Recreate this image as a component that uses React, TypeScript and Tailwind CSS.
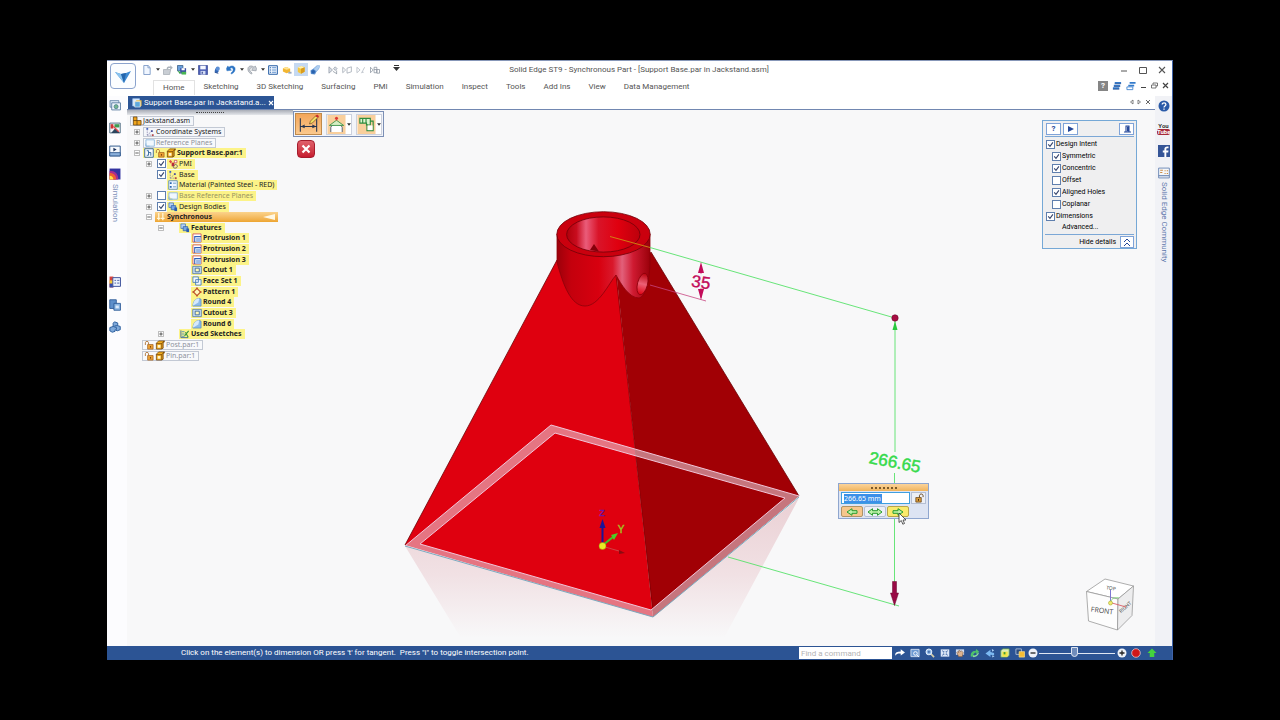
import React, { useState } from "react";

type IconName =
  | "new" | "open" | "saveAs" | "save" | "drop" | "undo" | "redo" | "list" | "box" | "cube" | "brush"
  | "selA" | "selB" | "selC" | "selD" | "asm" | "coord" | "plane" | "sketch" | "lock" | "part" | "pmi"
  | "material" | "bodies" | "sync" | "protrusion" | "cutout" | "faces" | "pattern" | "round" | "used"
  | "library" | "family" | "play" | "sim" | "sensors" | "layers" | "parts" | "window" | "cascade"
  | "fit" | "zoom" | "pan" | "rotate" | "move" | "views" | "style" | "goto" | "up" | "community";

const art: Record<IconName, React.ReactNode> = {
  new: <><path d="M2 .5h4.700l2.300 2.300v7.700H2z" fill="#f0f6ff" stroke="#6f90c0" strokeWidth=".9" /><path d="M6.500.800v2.300h2.200" fill="none" stroke="#6f90c0" strokeWidth=".8" /></>,
  open: <><path d="M.5 5h8l-1.200 5.500H.5z" fill="#c9ced4" stroke="#9aa1aa" strokeWidth=".7" /><path d="M4 4c0-2 2-2.600 4-2.200V.2L10.800 3 8 5.500V3.500C6.500 3.200 5.500 3.500 5.500 5z" fill="#a9b1ba" /></>,
  saveAs: <><path d="M.5.500h6v6h-6z" fill="#6aa0dd" stroke="#30557f" strokeWidth=".8" /><path d="M3.500 3.500h6.500v6H3.500z" fill="#3b4fa2" /><path d="M5 3.500h3.500v2.300H5z" fill="#fff" /><path d="M.5 6l2.500 4 1-2z" fill="#36a344" /><path d="M5 7.500h5v3H5z" fill="#49b653" /></>,
  save: <><path d="M.5.500h10v10H.5z" fill="#4c5fb5" stroke="#31428f" strokeWidth=".7" /><path d="M2.500.800h6v4h-6z" fill="#f5f8ff" /><path d="M2.800 6.500h5.400v4H2.800z" fill="#d3dcf4" /><path d="M4 7.300h1.300v2.400H4z" fill="#31428f" /></>,
  drop: <><path d="M6.800 2.200C4 2.500 2.800 4.800 3 8c1 1.500 3.600 1 4.200-.5z" fill="#3367b4" /><circle cx="6.300" cy="4" r="2.300" fill="#5c8fd6" /><path d="M3 8l4 1.400" stroke="#34528c" strokeWidth=".8" /></>,
  undo: <path d="M.5 3.800L2 1l1.200 1.500C6-.2 10.500 1 10 5c-.2 2.500-2 4-4 5l-.6-1.200C7.200 7.600 8.200 6 7.800 4.600c-.5-1.800-2.300-1.900-3.300-.5L6 5.800l-5 .6z" fill="#2a73c4" stroke="#2a73c4" strokeWidth=".5" />,
  redo: <path d="M10.500 3.800L9 1 7.800 2.500C5-.2.500 1 1 5c.2 2.500 2 4 4 5l.6-1.200C3.800 7.600 2.800 6 3.200 4.600c.5-1.800 2.300-1.900 3.300-.5L5 5.800l5 .6z" fill="#c9ced4" stroke="#8d949d" strokeWidth=".7" />,
  list: <><path d="M.7.800h9.600v9.400H.7z" fill="#f1f7ff" stroke="#2b62a7" strokeWidth="1.100" /><path d="M2 3h1.400M2 5.500h1.400M2 8h1.400" stroke="#2b62a7" strokeWidth="1.300" /><path d="M4.500 3H9M4.500 5.500H9M4.500 8H9" stroke="#5389c9" strokeWidth="1" /></>,
  box: <><path d="M1 3.500l4-1.200L9 4v3.600L5 9 1 7.200z" fill="#f2b632" /><path d="M1 3.500l4-1.200L9 4 5 5.300z" fill="#ffe391" /><path d="M7 7.500h3.500v2H7z" fill="#9aa9c2" /></>,
  cube: <><path d="M2 2.800l4-1.600 3.500 1.400v4.800L5.500 9.500 2 7.800z" fill="#f4c640" /><path d="M2 2.800l4-1.600 3.500 1.400L5.500 4z" fill="#fff0ae" /><path d="M5.500 4v5.500l4-2.100V2.600z" fill="#d99b1d" /></>,
  brush: <><path d="M.5 6l3-2 4-3.500h3.300L10 4 7 7.500 5.500 10.500 1 10z" fill="#5a8fd0" /><path d="M4 4.500l3 2.500 3.500-4V.5H8z" fill="#adcdf0" /><circle cx="3.500" cy="7.500" r="2" fill="#2a62ae" /></>,
  selA: <><path d="M1 2l4 3.500L1 9zM8 2l2 2-2 2-2-2z" fill="#d9dee6" stroke="#858e9b" strokeWidth=".7" /><path d="M5.500 7l4 2.500M9.500 6v4" stroke="#858e9b" strokeWidth=".8" /></>,
  selB: <path d="M.8 2.500L4 5.500.8 8.500zM5.500 3.500L10.300 2v5.500L5.500 9z" fill="none" stroke="#9aa2ae" strokeWidth=".8" />,
  selC: <path d="M1 2.500L4.500 5.500 1 8.500zM6 9l3.500-6.500M6.500 8h2" fill="none" stroke="#adb4be" strokeWidth=".8" />,
  selD: <path d="M.5 2.500L3.500 5.500.5 8.500zM4.500 2.500h3v6h-3zM7.500 5h3v4h-3zM4.500 5h3" fill="none" stroke="#858e9b" strokeWidth=".8" />,
  asm: <><path d="M1.500 1h4v4H10v5H1.500z" fill="#f0a51d" stroke="#5b3a0a" strokeWidth=".8" /><path d="M5.500 5v5M1.500 5h4" stroke="#5b3a0a" strokeWidth=".8" /></>,
  coord: <><path d="M2.500 9V2M2.500 9H9M2.500 9L8 4" stroke="#7f7aa7" strokeWidth=".8" fill="none" strokeDasharray="1.500 1" /><path d="M1.500 1h2v2h-2z" fill="#4361c2" /><path d="M7.500 8h2v2h-2z" fill="#b54848" /><path d="M6.500 3.500h2v2h-2z" fill="#4a4f9c" /></>,
  plane: <path d="M1 2h9.300v7H1zM1 6v3h4" fill="#f1f8fe" stroke="#85b3dc" strokeWidth=".9" />,
  sketch: <><path d="M.8.800h9.400v9.400H.8z" fill="#f8fbff" stroke="#2e6297" strokeWidth="1" /><path d="M3 3h2v5H3M5 5h2.500v3.500" fill="none" stroke="#2e6297" /></>,
  lock: <><path d="M4 5h6v5H4z" fill="#efa436" stroke="#a3601f" strokeWidth=".8" /><path d="M1.500 5.500V3c0-2 3.500-2 3.500 0v2" fill="none" stroke="#b0763b" strokeWidth="1" /><path d="M6.500 6.800h1.300v1.500H6.500z" fill="#6c3609" /></>,
  part: <><path d="M1.500 3.500L4 1h6.500L9 4v5L7 10H1.500z" fill="#f3ae20" stroke="#6a3d08" strokeWidth=".8" /><path d="M1.500 4h6v6M7.500 4L10 1" fill="none" stroke="#6a3d08" strokeWidth=".8" /><path d="M3 5.500h3v3H3z" fill="#fff5d0" /></>,
  pmi: <><path d="M1 2.500l2-1.500 1.500 2L3 5z" fill="#e04545" /><path d="M4 4h3v4H4z" fill="#b9283a" /><path d="M7 1.500h2.800v2.700H7z" fill="#fff" stroke="#b9283a" strokeWidth=".7" /><path d="M8 6c3 0 3 4 0 4s-3-2 0-4z" fill="none" stroke="#5b4a6c" strokeWidth=".9" /></>,
  material: <><path d="M.8.800h9.400v9.400H.8z" fill="#eef6ff" stroke="#3c78b4" strokeWidth=".8" /><path d="M2 2.500h2v2H2zM2 6.500h2v2H2z" fill="#2b67b0" /><path d="M5.500 3.500H9M5.500 7.500H9" stroke="#5a8cbd" strokeWidth=".9" /></>,
  bodies: <><path d="M1 1h5v5H1z" fill="#bad3f3" stroke="#3c6fbd" strokeWidth=".8" /><path d="M3.500 4h5v4.500h-5z" fill="#79a8e3" stroke="#2b5dab" strokeWidth=".8" /><path d="M7 6h3v4H7z" fill="#2a5cb1" /></>,
  sync: <path d="M3 1v8M7.500 1v8M1 7h4M5.500 7h4" stroke="#fff7d9" strokeWidth="1.400" />,
  protrusion: <><path d="M1 1h9v9H1z" fill="#fff" stroke="#d25860" strokeWidth="1" /><path d="M3 10V4h7" fill="none" stroke="#2d62b9" strokeWidth="1.200" /><path d="M4.500 5.500H10V10H4.500z" fill="#9db9e5" /></>,
  cutout: <><path d="M.8 1.500h9.500v8H.8z" fill="#c6dcf4" stroke="#47709f" strokeWidth=".8" /><path d="M3.500 3.500h4.500v4H3.500z" fill="#fff8b8" stroke="#315e96" strokeWidth=".9" /></>,
  faces: <path d="M1 1h6v6H1zM4 4h6v6H4z" fill="#f3f9ff" stroke="#3e78b7" strokeWidth=".9" />,
  pattern: <><path d="M5.500 1.500l4 4-4 4-4-4z" fill="#fff7bb" stroke="#bd522b" strokeWidth="1.200" /><path d="M4.800.500h1.400v2H4.800zM4.800 8.500h1.400v2H4.800zM.5 4.800h2v1.400h-2zM8.500 4.800h2v1.400h-2z" fill="#bd522b" /></>,
  round: <><path d="M1 10C1.300 5 3.500 2 8 1.500l2 1V10z" fill="#8dbbe9" stroke="#4c80b9" strokeWidth=".7" /><path d="M1 9.500C1.300 5 3.500 2 8 1.500L7 6z" fill="#d5e9fc" /></>,
  used: <><path d="M1 1.500v8h8" fill="none" stroke="#3b679e" strokeWidth="1" /><path d="M2 3h3M2 5.500h3M2 8h3" stroke="#4b8fbf" /><path d="M5 7.500L9.500 2M6 3.500L9 9" stroke="#389340" strokeWidth="1.200" /></>,
  library: <><path d="M1 1.500h8v6H1z" fill="#dce9f7" stroke="#55789f" strokeWidth=".7" /><path d="M2.500 3.500h8v6.500h-8z" fill="#f3f8fd" stroke="#55789f" strokeWidth=".8" /><circle cx="6.500" cy="7" r="1.900" fill="#75b58c" stroke="#39728b" strokeWidth=".6" /></>,
  family: <><path d="M.7 1h9.600v9H.7z" fill="#f0f3f7" stroke="#45647b" strokeWidth=".8" /><path d="M1.500 2h2.500v4H1.500z" fill="#cf3434" /><path d="M5 2h4.500v3H5z" fill="#3e9d52" /><path d="M2 10l3.500-4L10 10z" fill="#29435d" /><path d="M4 4l5 5" stroke="#e24747" strokeWidth="1.200" /></>,
  play: <><path d="M.7 1h9.600v9H.7z" fill="#f6f9fd" stroke="#315a8d" strokeWidth=".9" /><path d="M.7 7h9.600v3H.7z" fill="#8bb0db" stroke="#315a8d" strokeWidth=".8" /><path d="M4 2.500l3 1.700L4 6z" fill="#1c335e" /></>,
  sim: <><path d="M.5.500h10v10H.5z" fill="#3232a0" /><path d="M.5 2.500c5 0 8 3 8 8h-8z" fill="#aa2c8e" /><path d="M.5 4.500c4 0 6 2 6 6h-6z" fill="#ef6031" /><path d="M.5 7c2 0 3.500 1.500 3.500 3.500H.5z" fill="#ffe34e" /></>,
  sensors: <><path d="M.5.500h3.500v10H.5z" fill="#d6433c" /><path d="M.5 4h3.500v3H.5z" fill="#f2cb36" /><path d="M.5 7h3.500v3.500H.5z" fill="#3750aa" /><path d="M3.500 1.500h7v8h-7z" fill="#edf4ff" stroke="#40559d" strokeWidth=".9" /><path d="M5 4h1.500M7.500 4h2M5 6.500h1.500M7.500 6.500h2" stroke="#40559d" strokeWidth=".8" /></>,
  layers: <><path d="M.7.700h6v8h-6z" fill="#5d8fca" stroke="#2e5b97" strokeWidth=".8" /><path d="M4.500 4h6v6.300h-6z" fill="#88b4e1" stroke="#2e5b97" strokeWidth=".8" /><path d="M6 6h3v2.500H6z" fill="#dceafa" /></>,
  parts: <path d="M5 .8l3 1v2.500l2.300.7v3L7.500 9 5.500 8v1.500L3 10.300.8 9V6l3-1V2z M3.800 5l3 1v2M5 4.500l3-.3" fill="#7fa9da" stroke="#2f619f" strokeWidth=".9" />,
  window: <><path d="M3 1h7v2H3zM2 4h7v2H2zM1 7h7v2H1z" fill="#347bcb" /><path d="M3 3h7M2 6h7M1 9h7" stroke="#193d82" strokeWidth=".7" /></>,
  cascade: <><path d="M4 1h6.500v2H4zM2.500 4H9v2H2.500z" fill="#347bcb" /><path d="M1 6.500h6.500V9.500H1z" fill="#fff" stroke="#347bcb" strokeWidth=".9" /></>,
  fit: <><path d="M.8 1.500h9.400v8H.8z" fill="#dbe7f7" /><path d="M2.500 3l6 5M8.500 3l-6 5" stroke="#2c5494" strokeWidth="1" /><path d="M4 4.300h3v2.400H4z" fill="#fff" stroke="#5b85bf" strokeWidth=".6" /></>,
  zoom: <><path d="M6.500 6.500L10 10" stroke="#d8cfa8" strokeWidth="1.800" /><circle cx="4.300" cy="4.300" r="3.200" fill="#9bc3f0" stroke="#f1f8ff" strokeWidth="1" /><path d="M2.800 4.300h3M4.300 2.800v3" stroke="#27508f" strokeWidth=".8" /></>,
  pan: <><path d="M1 1.500h9v6H1z" fill="#cfdcf0" /><path d="M2 5l1-1 1 1V3l1-.5L6 4l1-1 1 1 1 1-1 4.500H4z" fill="#dcb38f" stroke="#6b4c38" strokeWidth=".6" /></>,
  rotate: <><path d="M1 9.500c-1-4 2-7 5-6l1-2.500 3 3-3 3-.3-2C5 5 3.500 6.500 3.500 9z" fill="#4dc26a" /><path d="M3 10c3 .5 6-1 7-5L8 6C7 8 5 8.500 3.500 8z" fill="#8ede9b" /></>,
  move: <><path d="M.5 6L6 2v2.500l4 1v2.500L6 7.500V10z" fill="#7cb9f2" /><path d="M7.500 1L10 2.500 8 4zM8 8l2.500 1L8 10.500z" fill="#b2d7fa" /></>,
  views: <><path d="M1 3l2-2h7v7l-2 2H1z" fill="#dcecb9" stroke="#7ab34d" strokeWidth=".8" /><path d="M2.500 4H8.500V9.500H2.500z" fill="#f2e541" /><path d="M4 4.500h2V7H4z" fill="#3d993b" /></>,
  style: <><path d="M1 1h6v6H1z" fill="#294c80" stroke="#b7c7df" strokeWidth=".9" /><path d="M4.500 4h6v6h-6z" fill="#f4bc33" stroke="#fde28b" strokeWidth=".7" /></>,
  goto: <path d="M.3 8.500c-.5-3.500 1.500-4.700 6-4.700V1.500L11 5 6.300 8.300V6.200C3.500 6 1.500 6.500.3 8.500z" fill="#fff" />,
  up: <path d="M5.500.5L10.500 5.500H8V10H3V5.500H.5z" fill="#44d43d" />,
  community: <><path d="M.6 1h9.800v9H.6z" fill="#f5f7fa" stroke="#627fb0" strokeWidth=".8" /><path d="M2 3h2.500M2 5h2M6 3.500h1M8 3.500h1.200M6 6h1M8 6h1.200" stroke="#cb8b45" strokeWidth="1" /><path d="M.6 8h9.800" stroke="#627fb0" /></>,
};

function Icon({ name, big = false }: { name: IconName; big?: boolean }) {
  return (
    <svg viewBox="0 0 11 11" aria-hidden="true" className={big ? "h-3 w-3 shrink-0" : "h-[10px] w-[10px] shrink-0"}>
      {art[name]}
    </svg>
  );
}

const Caret = () => (
  <svg viewBox="0 0 6 4" aria-hidden="true" className="h-[3px] w-1"><path d="M0 0h6L3 4z" fill="#333" /></svg>
);

function Check({ label, on = false, hidden = false }: { label: string; on?: boolean; hidden?: boolean }) {
  return (
    <label className="flex items-center gap-px whitespace-nowrap">
      <span className="relative flex">
        <input type="checkbox" defaultChecked={on} aria-label={label} className="peer h-[9px] w-[9px] appearance-none border border-[#5f7fae] bg-white" />
        <svg viewBox="0 0 9 9" aria-hidden="true" className="pointer-events-none absolute inset-0 hidden h-[9px] w-[9px] peer-checked:block">
          <path d="M2.200 4.300l1.800 2L6.900 2.400" fill="none" stroke="#34436b" strokeWidth="1.100" />
        </svg>
      </span>
      {!hidden && label}
    </label>
  );
}

const quick: { icon: IconName; label: string; menu?: boolean; active?: boolean; gap?: boolean }[] = [
  { icon: "new", label: "New", menu: true },
  { icon: "open", label: "Open" },
  { icon: "saveAs", label: "Save as", menu: true },
  { icon: "save", label: "Save" },
  { icon: "drop", label: "Paint" },
  { icon: "undo", label: "Undo", menu: true },
  { icon: "redo", label: "Redo", menu: true },
  { icon: "list", label: "Properties" },
  { icon: "box", label: "Ordered" },
  { icon: "cube", label: "Synchronous", active: true },
  { icon: "brush", label: "Style" },
  { icon: "selA", label: "Select chain", gap: true },
  { icon: "selB", label: "Select face" },
  { icon: "selC", label: "Select edge" },
  { icon: "selD", label: "Select bodies" },
];

const ribbonTabs = ["Home", "Sketching", "3D Sketching", "Surfacing", "PMI", "Simulation", "Inspect", "Tools", "Add Ins", "View", "Data Management"];

function Header() {
  return (
    <header className="flex h-[35px] shrink-0 bg-white font-['Roboto',sans-serif] text-[8px]">
      <button aria-label="Application menu" className="ml-[3px] mt-[2px] flex h-[26px] w-[26px] items-center justify-center rounded-sm border border-[#8ba3cd] bg-[#fbfdff]">
        <svg viewBox="0 0 20 20" aria-hidden="true" className="h-5 w-5">
          <path d="M2 6l6 2 5-1 5-2-7 12z" fill="#3f8bd3" />
          <path d="M2 6l6 2 3 9z" fill="#8bc4ef" />
          <path d="M8 8l5-1-2 10z" fill="#2466ad" />
        </svg>
      </button>
      <div className="flex min-w-0 flex-1 flex-col">
        <div className="flex h-[17px] items-center justify-between">
          <div className="ml-1 flex w-[272px] items-center">
            {quick.map((q) => (
              <React.Fragment key={q.icon}>
                <button aria-label={q.label} className={`flex h-[13px] w-[14px] items-center justify-center ${q.active ? "bg-[#c5d9f2]" : ""} ${q.gap ? "ml-1" : ""}`}>
                  <Icon name={q.icon} />
                </button>
                {q.menu && <button aria-label={`${q.label} options`} className="flex h-3 w-[7px] items-center justify-center"><Caret /></button>}
              </React.Fragment>
            ))}
            <button aria-label="Customize toolbar" className="ml-[11px] pb-1">
              <svg viewBox="0 0 7 6" aria-hidden="true" className="h-[6px] w-[7px]"><path d="M1 0h5v1H1zM0 2h7L3.500 6z" fill="#333" /></svg>
            </button>
          </div>
          <h1 className="whitespace-nowrap text-[#555]">Solid Edge ST9 - Synchronous Part - [Support Base.par in Jackstand.asm]</h1>
          <div className="flex w-[306px] items-center justify-end gap-[11px] pr-[6px]">
            <button aria-label="Minimize"><svg viewBox="0 0 8 8" className="h-2 w-2"><path d="M1 5h6" stroke="#555" /></svg></button>
            <button aria-label="Maximize"><svg viewBox="0 0 8 8" className="h-2 w-2"><path d="M.5 1.500h7v6h-7z" fill="none" stroke="#555" /></svg></button>
            <button aria-label="Close"><svg viewBox="0 0 8 8" className="h-2 w-2"><path d="M1 1l6 6M7 1L1 7" stroke="#555" strokeWidth="1.100" /></svg></button>
          </div>
        </div>
        <nav aria-label="Ribbon" className="flex h-[18px] items-center justify-between">
          <div className="ml-[17px] flex items-center">
            {ribbonTabs.map((t, i) => (
              <button key={t} className={`h-[15px] whitespace-nowrap px-[9px] text-[#555] ${i === 0 ? "border-x border-t border-[#e2e2e2]" : ""}`}>{t}</button>
            ))}
          </div>
          <div className="flex items-center gap-1 pb-[3px] pr-[3px]">
            <button aria-label="Help" className="flex h-[10px] w-[10px] items-center justify-center bg-[#858585] font-bold text-white">?</button>
            <button aria-label="Arrange windows"><Icon name="window" /></button>
            <button aria-label="Cascade windows"><Icon name="cascade" /></button>
            <button aria-label="Minimize document"><svg viewBox="0 0 7 7" className="h-[7px] w-[7px]"><path d="M1 5.500h5" stroke="#444" /></svg></button>
            <button aria-label="Restore document"><svg viewBox="0 0 7 7" className="h-[7px] w-[7px]"><path d="M2 2.500V1h4.500v3H5M.5 3H5v3H.5z" fill="none" stroke="#555" strokeWidth=".8" /></svg></button>
            <button aria-label="Close document"><svg viewBox="0 0 7 7" className="h-[7px] w-[7px]"><path d="M1 1l5 5M6 1L1 6" stroke="#444" strokeWidth="1.200" /></svg></button>
          </div>
        </nav>
      </div>
    </header>
  );
}

type Row = { text: string; pad: string; icons: IconName[]; exp?: "+" | "-"; check?: boolean; gap?: boolean; kind?: "box" | "dim" | "bold" | "yellow" | "yellowDim" | "active" };

const rows: Row[] = [
  { text: "Jackstand.asm", pad: "pl-[3px]", icons: ["asm"], kind: "box" },
  { text: "Coordinate Systems", pad: "pl-1", exp: "+", icons: ["coord"], kind: "box" },
  { text: "Reference Planes", pad: "pl-1", exp: "+", icons: ["plane"], kind: "dim" },
  { text: "Support Base.par:1", pad: "pl-1", exp: "-", icons: ["sketch", "lock", "part"], kind: "bold" },
  { text: "PMI", pad: "pl-4", exp: "+", check: true, icons: ["pmi"], kind: "yellow" },
  { text: "Base", pad: "pl-7", check: true, icons: ["coord"], kind: "yellow" },
  { text: "Material (Painted Steel - RED)", pad: "pl-10", icons: ["material"], kind: "yellow" },
  { text: "Base Reference Planes", pad: "pl-4", exp: "+", check: false, icons: ["plane"], kind: "yellowDim" },
  { text: "Design Bodies", pad: "pl-4", exp: "+", check: true, icons: ["bodies"], kind: "yellow" },
  { text: "Synchronous", pad: "pl-4", exp: "-", icons: ["sync"], kind: "active" },
  { text: "Features", pad: "pl-7", exp: "-", gap: true, icons: ["bodies"], kind: "bold" },
  { text: "Protrusion 1", pad: "pl-16", icons: ["protrusion"], kind: "bold" },
  { text: "Protrusion 2", pad: "pl-16", icons: ["protrusion"], kind: "bold" },
  { text: "Protrusion 3", pad: "pl-16", icons: ["protrusion"], kind: "bold" },
  { text: "Cutout 1", pad: "pl-16", icons: ["cutout"], kind: "bold" },
  { text: "Face Set 1", pad: "pl-16", icons: ["faces"], kind: "bold" },
  { text: "Pattern 1", pad: "pl-16", icons: ["pattern"], kind: "bold" },
  { text: "Round 4", pad: "pl-16", icons: ["round"], kind: "bold" },
  { text: "Cutout 3", pad: "pl-16", icons: ["cutout"], kind: "bold" },
  { text: "Round 6", pad: "pl-16", icons: ["round"], kind: "bold" },
  { text: "Used Sketches", pad: "pl-7", exp: "+", gap: true, icons: ["used"], kind: "bold" },
  { text: "Post.par:1", pad: "pl-[15px]", icons: ["lock", "part"], kind: "dim" },
  { text: "Pin.par:1", pad: "pl-[15px]", icons: ["lock", "part"], kind: "dim" },
];

const kinds = {
  box: "border border-[#c3c9d4] bg-[#f4f6fa]",
  dim: "border border-[#c3c9d4] bg-[#f8f9fb] text-[#8d929c]",
  bold: "bg-[#fcf388] font-bold",
  yellow: "bg-[#fcf388]",
  yellowDim: "bg-[#fcf388] text-[#989461]",
  active: "w-[123px] bg-linear-to-b from-[#fbd38b] to-[#eda52f] font-bold",
};

function TreeRow({ row }: { row: Row }) {
  return (
    <li className={`flex items-center ${row.pad}`}>
      {row.exp && (
        <button aria-label={`Toggle ${row.text}`} className="flex w-3 shrink-0 justify-center">
          <svg viewBox="0 0 7 7" className="h-[6px] w-[6px]">
            <path d="M.5.500h6v6h-6z" fill="#fff" stroke="#9a9a9a" strokeWidth=".8" />
            <path d={row.exp === "+" ? "M1.500 3.500h4M3.500 1.500v4" : "M1.500 3.500h4"} stroke="#333" strokeWidth=".9" />
          </svg>
        </button>
      )}
      {row.check !== undefined && <span className="flex w-3 shrink-0 justify-center"><Check label={row.text} on={row.check} hidden /></span>}
      {row.gap && <span className="w-3 shrink-0" />}
      <span className={`flex h-[10px] items-center gap-px whitespace-nowrap pl-px pr-[3px] ${kinds[row.kind ?? "box"]}`}>
        {row.icons.map((i) => <Icon key={i} name={i} />)}
        <span>{row.text}</span>
        {row.kind === "active" && (
          <svg viewBox="0 0 12 6" aria-hidden="true" className="ml-auto h-[6px] w-3"><path d="M0 3L12 0v6z" fill="#fff8e4" /></svg>
        )}
      </span>
    </li>
  );
}

function PathFinder() {
  return (
    <aside aria-label="PathFinder" className="relative w-[166px] shrink-0 self-start">
      <div className="flex h-[5px] items-center justify-center bg-linear-to-b from-[#a9adb6] to-[#e5e7eb]">
        <span className="w-7 border-t border-dotted border-[#444]" />
      </div>
      <ul className="mt-px grid h-[245px] auto-rows-fr">
        {rows.map((r) => <TreeRow key={r.text} row={r} />)}
      </ul>
    </aside>
  );
}

function CommandBar() {
  return (
    <div className="relative flex shrink-0 flex-col items-start gap-[3px]">
      <div className="mt-px flex h-[26px] items-center gap-1 border border-[#7b8fb5] bg-[#f2f4f9] px-px">
        <button aria-label="Smart dimension" className="border border-[#c08a4a] bg-linear-to-b from-[#f3a65a] to-[#fbc98d]">
          <svg viewBox="0 0 26 20" className="h-5 w-[25px]">
            <path d="M4.500 4v14M21.500 4v14M5 12.500h16" fill="none" stroke="#26344f" strokeWidth="1.100" />
            <path d="M5 12.500l4-2v4zM21 12.500l-4-2v4z" fill="#26344f" />
            <path d="M14 10l1-3 6-6 2 2-6 6z" fill="#f3df65" stroke="#714b20" strokeWidth=".7" />
            <path d="M20 2l2-2 2 2-1.500 1.500z" fill="#c92d2d" />
          </svg>
        </button>
        <button aria-label="Dimension orientation" className="flex items-center gap-px border border-[#ccd1dd] bg-white">
          <svg viewBox="0 0 19 20" className="h-[19px] w-[19px]">
            <path d="M0 0h19v20H0z" fill="#f9cf9c" />
            <path d="M3.500 18v-5c1-4 11-4 12 0v5" fill="#fff" stroke="#3e506d" strokeWidth=".9" />
            <path d="M2 11L9.500 5.500 17 11z" fill="#d6edc2" stroke="#369044" strokeWidth=".9" />
            <path d="M9.500 3v3" stroke="#dc3934" strokeWidth=".8" />
            <circle cx="9.500" cy="3.500" r="1.600" fill="#dc3934" />
          </svg>
          <Caret />
        </button>
        <button aria-label="Dimension tracking" className="flex items-center gap-px border border-[#ccd1dd] bg-white">
          <svg viewBox="0 0 19 20" className="h-[19px] w-[19px]">
            <path d="M0 0h19v20H0z" fill="#f9cf9c" />
            <path d="M2.500 3.500h11v7h-4v-2h-7z" fill="#dff4cf" stroke="#2d8c3e" strokeWidth="1.200" />
            <path d="M5.500 3.500v5M9 3.500v5M10 9.500v7h6.500v-10h-3" fill="none" stroke="#2d8c3e" strokeWidth="1.200" />
            <path d="M10.600 11h5.300v5h-5.300z" fill="#fff" />
          </svg>
          <Caret />
        </button>
      </div>
      <button aria-label="Cancel" className="ml-1 flex h-[18px] w-[18px] items-center justify-center rounded-sm border border-[#a51d2d] bg-linear-to-b from-[#e0606b] to-[#c61a30]">
        <svg viewBox="0 0 10 10" className="h-[10px] w-[10px]"><path d="M1.500 1.500l7 7M8.500 1.500l-7 7" stroke="#fff" strokeWidth="2.200" /></svg>
      </button>
    </div>
  );
}

function IntentPanel() {
  return (
    <section aria-label="Design Intent" className="relative ml-auto mr-[18px] mt-[10px] w-[95px] shrink-0 self-start border border-[#75a8d6] bg-[#efeff0] px-[2px] font-['Roboto',sans-serif] text-black">
      <div className="flex h-4 items-center gap-[2px] border-b border-[#7ba7d6] pl-px">
        <button aria-label="Help" className="h-3 w-[15px] border border-[#7fa3d8] bg-white text-[8px] font-bold leading-[10px] text-[#25489a]">?</button>
        <button aria-label="Play" className="flex h-3 w-[15px] items-center justify-center border border-[#7fa3d8] bg-white">
          <svg viewBox="0 0 6 6" className="h-[6px] w-[6px]"><path d="M0 0l6 3-6 3z" fill="#25489a" /></svg>
        </button>
        <button aria-label="Pin" className="ml-auto flex h-3 w-[15px] items-center justify-center border border-[#7fa3d8] bg-white">
          <svg viewBox="0 0 8 8" className="h-2 w-2"><path d="M2.500 1h4M3 1v5.500M6 1v5.500M1 7h7" fill="none" stroke="#25489a" strokeWidth="1.100" /><path d="M4 1.500h2v5H4z" fill="#25489a" /></svg>
        </button>
      </div>
      <div className="mt-px flex flex-col pl-[1px] leading-3">
        <Check label="Design Intent" on />
        <div className="flex flex-col pl-[6px]">
          <Check label="Symmetric" on />
          <Check label="Concentric" on />
          <Check label="Offset" />
          <Check label="Aligned Holes" on />
          <Check label="Coplanar" />
        </div>
        <Check label="Dimensions" on />
      </div>
      <button className="block pl-[17px] leading-[11px]">Advanced...</button>
      <div className="mt-px flex items-center justify-end gap-1 border-t border-[#7ba7d6] pt-px leading-3">
        Hide details
        <button aria-label="Collapse" className="flex h-3 w-[14px] items-center justify-center border border-[#7fa3d8] bg-white">
          <svg viewBox="0 0 8 9" className="h-[9px] w-2"><path d="M1 4l3-3 3 3M1 8l3-3 3 3" fill="none" stroke="#25489a" /></svg>
        </button>
      </div>
    </section>
  );
}

function Model() {
  return (
    <svg viewBox="127 110 1028 536" role="img" aria-label="Support base model" className="absolute inset-0 h-full w-full">
      <defs>
        <linearGradient id="reflection" x1="0" y1="0" x2="0" y2="1">
          <stop offset="0" stopColor="#ead0d4" />
          <stop offset=".55" stopColor="#f1e1e4" />
          <stop offset="1" stopColor="#f8f8f9" />
        </linearGradient>
        <linearGradient id="wall" x1="557" x2="650" y1="0" y2="0" gradientUnits="userSpaceOnUse">
          <stop offset="0" stopColor="#9c000a" /><stop offset=".15" stopColor="#c4000d" />
          <stop offset=".45" stopColor="#d8000f" /><stop offset=".6" stopColor="#d9182b" />
          <stop offset=".7" stopColor="#e2607a" /><stop offset=".82" stopColor="#cf1a31" />
          <stop offset="1" stopColor="#9a000a" />
        </linearGradient>
        <linearGradient id="bore" x1="567" x2="640" y1="0" y2="0" gradientUnits="userSpaceOnUse">
          <stop offset="0" stopColor="#b0000b" /><stop offset=".13" stopColor="#c80c1e" />
          <stop offset=".26" stopColor="#ea5c7a" /><stop offset=".43" stopColor="#d91429" />
          <stop offset=".7" stopColor="#e0000f" /><stop offset="1" stopColor="#bc000c" />
        </linearGradient>
        <linearGradient id="hole" x1="0" y1="0" x2="0" y2="1">
          <stop offset="0" stopColor="#b8000c" /><stop offset=".5" stopColor="#ed6076" /><stop offset="1" stopColor="#df0010" />
        </linearGradient>
      </defs>
      <path d="M405 546L461 638H724L799 498L653 617z" fill="url(#reflection)" />
      <path d="M557 260L405 545L653 617L616 270z" fill="#df000f" />
      <path d="M651 252L799 496L653 617L616 270z" fill="#a10005" />
      <path d="M557 260L405 545M651 252L799 496" stroke="#6b0005" strokeWidth=".8" />
      <path d="M616 275L653 611" stroke="#850006" strokeWidth=".8" />
      <path d="M557 234V262C563 285 571 306 585 306C599 306 609 283 616 275C621 284 629 298 639 298C646 297 650 277 650 262V234z" fill="url(#wall)" stroke="#8b0009" strokeWidth=".8" />
      <ellipse cx="603.500" cy="234.200" rx="46.700" ry="22.500" fill="#ca000e" stroke="#700007" strokeWidth=".8" />
      <ellipse cx="603.300" cy="234.500" rx="36.700" ry="17.600" fill="url(#bore)" stroke="#700007" strokeWidth=".8" />
      <path d="M590 250L594 244L599 251.500z" fill="#85000a" />
      <ellipse cx="642.500" cy="284" rx="5" ry="11" fill="url(#hole)" stroke="#8c000a" strokeWidth=".8" transform="rotate(14 642.500 284)" />
      <path fillRule="evenodd" d="M405 546L551 425L799 496L653 617zM420 544L651 610L785 498L555 433z" fill="#ece9f6" fillOpacity=".5" />
      <path d="M405 546L551 425L799 496M420 544L651 610L785 498L555 433z" fill="none" stroke="#f0c5d8" strokeWidth="1" />
      <path d="M405 546L653 617L799 497" fill="none" stroke="#7ba9be" strokeWidth="1" />

      <path d="M610 236.500L650 247.500" stroke="#cf8c12" strokeWidth=".9" />
      <path d="M650 247.500L895 318M895 320L895 452M894.500 473V483M894.500 518V604M728 557L899 606" fill="none" stroke="#57e26a" strokeWidth=".9" />
      <path d="M895 321L897.500 330H892.500z" fill="#28c93d" />
      <circle cx="895" cy="318" r="3.200" fill="#a80d43" stroke="#6d092c" strokeWidth=".6" />
      <path d="M892.500 581.500H896.500V593H898.500L894.500 605.500L890.500 593H892.500z" fill="#990b46" stroke="#650628" strokeWidth=".5" />
      <text x="895" y="468" textAnchor="middle" transform="rotate(11 895 462)" fontSize="17" fill="#36da4c" stroke="#36da4c" strokeWidth=".5" className="font-['Liberation_Sans',sans-serif]">266.65</text>
      <path d="M650 285L706 301M701 268V298" stroke="#c84581" strokeWidth=".8" />
      <path d="M701 262L704 273H698zM701 300L704 289H698z" fill="#c30c5a" />
      <path d="M691 274h20v14h-20z" fill="#f8f8f9" fillOpacity=".9" />
      <text x="701" y="288" textAnchor="middle" transform="rotate(8 701 282)" fontSize="17" fill="#c30c5a" stroke="#c30c5a" strokeWidth=".4" className="font-['Liberation_Sans',sans-serif]">35</text>

      <path d="M602.500 545V525" stroke="#1b1398" strokeWidth="2" />
      <path d="M602.500 519L605.500 528H599.500z" fill="#1b1398" />
      <path d="M603 545L613 537" stroke="#44bf25" strokeWidth="2.200" />
      <path d="M618 533L611 535L614 540z" fill="#49cf28" />
      <path d="M605 547L619 551" stroke="#c95353" strokeWidth=".8" />
      <path d="M625 553L619 550V554z" fill="#8d0a10" />
      <circle cx="602.500" cy="546" r="3.500" fill="#e9e925" stroke="#9b940d" strokeWidth=".5" />
      <text x="602" y="516" textAnchor="middle" fontSize="9" fill="#7015a5" stroke="#7015a5" strokeWidth=".4" className="font-['Liberation_Sans',sans-serif]">Z</text>
      <text x="621" y="533" textAnchor="middle" fontSize="10" fill="#9fc521" stroke="#9fc521" strokeWidth=".4" className="font-['Liberation_Sans',sans-serif]">Y</text>

      <g stroke="#999" strokeWidth=".8" strokeLinejoin="round">
        <path d="M1086.500 591.500L1105 579L1133.500 586L1118 599z" fill="#fff" />
        <path d="M1086.500 591.500L1118 599L1117.500 630L1088.500 621z" fill="#fdfdfd" />
        <path d="M1118 599L1133.500 586L1132 615.500L1117.500 630z" fill="#ededee" />
      </g>
      <g className="font-['Open_Sans',sans-serif]" textAnchor="middle" fill="#444">
        <text x="1102" y="613" fontSize="7" transform="rotate(8 1102 611)">FRONT</text>
        <text x="1111" y="590" fontSize="5" transform="rotate(10 1111 588)">TOP</text>
        <text x="1125" y="609" fontSize="5" transform="rotate(-42 1125 607)">RIGHT</text>
      </g>
      <path d="M1110.500 603V590" stroke="#7d78d3" strokeWidth="1" />
      <path d="M1112 603L1126 607" stroke="#d95d68" strokeWidth=".9" />
      <path d="M1111 602C1111 598 1116 597 1119 598" fill="none" stroke="#7bd576" strokeWidth=".9" />
      <circle cx="1110.500" cy="603" r="2" fill="#efed71" stroke="#aaa62b" strokeWidth=".6" />
    </svg>
  );
}

function GreenArrow({ dir }: { dir: "left" | "both" | "right" }) {
  const d = {
    left: "M4 4l5-3.300v2h5v2.600H9v2z",
    both: "M2 4l4.500-3.300v2h5v-2L16 4l-4.500 3.300v-2h-5v2z",
    right: "M14 4L9 .7v2H4v2.600h5v2z",
  }[dir];
  return <svg viewBox="0 0 18 8" className="h-2 w-[18px]"><path d={d} fill="#bdf0a8" stroke="#279c2d" strokeWidth="1" /></svg>;
}

function DimensionEdit() {
  const [value, setValue] = useState("266.65 mm");
  return (
    <div className="absolute left-[711px] top-[373px] flex w-[91px] flex-col border border-[#8fa6cf] bg-[#dde4f3]">
      <div className="flex h-[7px] items-center justify-center bg-linear-to-b from-[#fbd49a] to-[#f1b45c]">
        <span className="w-[26px] border-t-2 border-dotted border-[#7c5a2a]" />
      </div>
      <div className="flex items-center justify-between px-[2px] pt-px">
        <span className="relative flex h-3 w-[69px] items-center border border-[#3f9fe0] bg-white pl-[2px]">
          <input aria-label="Dimension value" value={value} onChange={(e) => setValue(e.target.value)} className="h-[9px] w-[38px] bg-[#3b90e8] leading-[9px] text-white outline-none" />
        </span>
        <button aria-label="Lock dimension" className="flex h-3 w-[15px] items-center justify-center border border-[#b5bfd3] bg-[#eceff6]">
          <svg viewBox="0 0 11 11" className="h-[10px] w-[10px]">
            <path d="M2 5h6v5H2z" fill="#d99a3a" stroke="#604017" strokeWidth=".8" />
            <path d="M6 5V3c0-2.500 4-2.500 4 0v1.500" fill="none" stroke="#604017" strokeWidth="1" />
            <path d="M4.500 6.500h1v2h-1z" fill="#352008" />
          </svg>
        </button>
      </div>
      <div className="flex gap-px px-[2px] pb-px pt-[2px]">
        <button aria-label="Move left" className="flex h-[11px] w-[22px] items-center justify-center rounded-xs border border-[#b09365] bg-[#f6c68c]"><GreenArrow dir="left" /></button>
        <button aria-label="Move symmetric" className="flex h-[11px] w-[22px] items-center justify-center rounded-xs border border-[#b5bfd3] bg-[#eceff6]"><GreenArrow dir="both" /></button>
        <button aria-label="Move right" className="flex h-[11px] w-[22px] items-center justify-center rounded-xs border border-[#b8a648] bg-[#faea6c]"><GreenArrow dir="right" /></button>
      </div>
      <svg viewBox="0 0 9 13" aria-hidden="true" className="absolute left-[59px] top-[28px] h-[13px] w-[9px]">
        <path d="M1 1v9.500l2.300-2 1.500 3.700 1.700-.7L5 8h3z" fill="#fff" stroke="#333" strokeWidth=".8" />
      </svg>
    </div>
  );
}

const viewTools: { icon: IconName; label: string }[] = [
  { icon: "window", label: "Zoom area" },
  { icon: "zoom", label: "Zoom" },
  { icon: "fit", label: "Fit" },
  { icon: "pan", label: "Pan" },
  { icon: "rotate", label: "Rotate" },
  { icon: "move", label: "Look at face" },
  { icon: "views", label: "View orientation" },
  { icon: "style", label: "View style" },
];

function StatusBar() {
  return (
    <footer className="flex h-[14px] shrink-0 items-center bg-[#2c5494] pl-[74px] pr-[15px] font-['Roboto',sans-serif] text-[8px]">
      <p className="whitespace-pre text-white">{"Click on the element(s) to dimension OR press 't' for tangent.  Press \"i\" to toggle intersection point."}</p>
      <div className="ml-auto flex items-center">
        <input aria-label="Find a command" placeholder="Find a command" className="h-3 w-[93px] bg-white px-[2px] placeholder:text-[#b3b3b3]" />
        <button aria-label="Go" className="flex w-[15px] justify-center"><Icon name="goto" /></button>
        {viewTools.map((t) => (
          <button key={t.label} aria-label={t.label} className="flex w-[15px] justify-center">
            {t.label === "Zoom area" ? (
              <svg viewBox="0 0 11 11" className="h-[10px] w-[10px]"><path d="M1 9.500V1.500h9v8z" fill="#6c99d2" stroke="#dfeaf8" strokeWidth=".9" /><circle cx="6" cy="6" r="2" fill="none" stroke="#fff" /><path d="M7.500 7.500L10 10" stroke="#fff" /></svg>
            ) : (
              <Icon name={t.icon} />
            )}
          </button>
        ))}
        <button aria-label="Zoom out" className="flex w-3 justify-center">
          <svg viewBox="0 0 10 10" className="h-[10px] w-[10px]"><circle cx="5" cy="5" r="4.500" fill="#eef2f8" /><path d="M2.500 5h5" stroke="#222" strokeWidth="1.300" /></svg>
        </button>
        <input
          type="range"
          aria-label="Zoom level"
          defaultValue={46}
          className="h-[10px] w-[76px] appearance-none bg-transparent [&::-webkit-slider-runnable-track]:h-px [&::-webkit-slider-runnable-track]:bg-[#dfe6f2] [&::-webkit-slider-thumb]:mt-[-6px] [&::-webkit-slider-thumb]:h-[10px] [&::-webkit-slider-thumb]:w-[7px] [&::-webkit-slider-thumb]:appearance-none [&::-webkit-slider-thumb]:rounded-b [&::-webkit-slider-thumb]:border [&::-webkit-slider-thumb]:border-[#dfe6f2] [&::-webkit-slider-thumb]:bg-[#6f8cbb]"
        />
        <button aria-label="Zoom in" className="flex w-[14px] justify-center">
          <svg viewBox="0 0 10 10" className="h-[10px] w-[10px]"><circle cx="5" cy="5" r="4.500" fill="#eef2f8" /><path d="M2.500 5h5M5 2.500v5" stroke="#222" strokeWidth="1.300" /></svg>
        </button>
        <button aria-label="Record" className="flex w-[14px] justify-center">
          <svg viewBox="0 0 10 10" className="h-[10px] w-[10px]"><circle cx="5" cy="5" r="4.300" fill="#cf1719" stroke="#f0d7da" strokeWidth=".7" /></svg>
        </button>
        <button aria-label="Upload" className="ml-1 flex w-[10px] justify-center"><Icon name="up" /></button>
      </div>
    </footer>
  );
}

export default function App() {
  return (
    <div className="flex h-screen flex-col bg-black px-[107px] py-[60px] font-['Noto_Sans',sans-serif] text-[7px] leading-[10px] text-[#222]">
      <div className="flex min-h-0 flex-1 flex-col overflow-hidden border-r border-t border-r-[#3f63a8] border-t-[#8797b8] bg-[#f8f8f9]">
        <Header />
        <div className="flex min-h-0 flex-1">
          <nav aria-label="Left docking tabs" className="flex w-5 shrink-0 flex-col items-start bg-[#fcfcfe] pl-[2px] pt-[3px]">
            <button aria-label="Parts library" className="flex h-[23px] items-start"><Icon name="library" big /></button>
            <button aria-label="Family of parts" className="flex h-[23px] items-start"><Icon name="family" big /></button>
            <button aria-label="Playback" className="flex h-[23px] items-start"><Icon name="play" big /></button>
            <button className="flex h-[108px] flex-col items-center gap-1 font-['Roboto',sans-serif] text-[8px] leading-3 text-[#7b8fb8]">
              <Icon name="sim" big />
              <span className="[writing-mode:vertical-rl]">Simulation</span>
            </button>
            <button aria-label="Sensors" className="flex h-[23px] items-start"><Icon name="sensors" big /></button>
            <button aria-label="Layers" className="flex h-[22px] items-start"><Icon name="layers" big /></button>
            <button aria-label="Parts" className="flex h-[22px] items-start"><Icon name="parts" big /></button>
          </nav>

          <main className="flex min-w-0 flex-1 flex-col">
            <div className="flex h-[14px] shrink-0 items-start justify-between border-b border-[#7187b1] bg-white">
              <div className="ml-px flex h-[13px] w-[146px] items-center gap-[2px] bg-[#2c5595] pl-1 pr-[3px] font-['Roboto',sans-serif] text-[8px] text-white">
                <svg viewBox="0 0 11 11" aria-hidden="true" className="h-[10px] w-[10px] shrink-0">
                  <path d="M.8.800h7.500v8H.8z" fill="#dfeeff" stroke="#9cc3ee" strokeWidth=".8" /><path d="M3 4l2-1.500h5.500V8L9 10H3z" fill="#f1be49" /><path d="M3 4h6v6H3z" fill="#5da8dc" stroke="#fff" strokeWidth=".6" />
                </svg>
                <span className="flex-1 whitespace-nowrap">Support Base.par in Jackstand.a...</span>
                <button aria-label="Close tab"><svg viewBox="0 0 6 6" className="h-[6px] w-[6px]"><path d="M1 1l4 4M5 1L1 5" stroke="#fff" strokeWidth="1.100" /></svg></button>
              </div>
              <div className="flex h-[11px] items-center gap-[3px] pr-1">
                <button aria-label="Previous tab"><svg viewBox="0 0 5 6" className="h-[6px] w-[5px]"><path d="M4 1L1.500 3 4 5z" fill="none" stroke="#666" strokeWidth=".8" /></svg></button>
                <button aria-label="Next tab"><svg viewBox="0 0 5 6" className="h-[6px] w-[5px]"><path d="M1 1l2.500 2L1 5z" fill="none" stroke="#666" strokeWidth=".8" /></svg></button>
                <button aria-label="Close view"><svg viewBox="0 0 6 6" className="h-[6px] w-[6px]"><path d="M1 1l4 4M5 1L1 5" stroke="#555" strokeWidth=".9" /></svg></button>
              </div>
            </div>
            <div className="relative flex min-h-0 flex-1">
              <Model />
              <PathFinder />
              <CommandBar />
              <IntentPanel />
              <DimensionEdit />
            </div>
          </main>

          <nav aria-label="Right docking tabs" className="flex w-[17px] shrink-0 flex-col items-center bg-[#f1f2f6] pt-1">
            <button aria-label="Help" className="flex h-[23px] items-start">
              <svg viewBox="0 0 12 12" className="h-3 w-3"><circle cx="6" cy="6" r="5.500" fill="#2a5aa8" /><path d="M4.200 4.600c0-2.400 3.700-2.300 3.700 0C7.900 6 6 6 6 7.400M6 8.500v1.300" fill="none" stroke="#fff" strokeWidth="1.300" /></svg>
            </button>
            <button aria-label="YouTube" className="flex h-[22px] items-start">
              <span className="flex w-[13px] flex-col items-center font-['Roboto',sans-serif] text-[6px] font-bold leading-[6px]">
                <span className="text-[#333]">You</span>
                <span className="w-full rounded-xs bg-[#a62a3b] text-center text-white">Tube</span>
              </span>
            </button>
            <button aria-label="Facebook" className="flex h-[22px] items-start">
              <svg viewBox="0 0 12 12" className="h-3 w-3"><path d="M0 0h12v12H0z" fill="#355597" /><path d="M8.300 12V7.500h1.900l.3-2H8.300V4.300c0-.7.300-1 1.200-1h1V1.500C8 1.100 6.400 2 6.400 4v1.500H4.800v2h1.600V12z" fill="#fff" /></svg>
            </button>
            <button className="flex flex-col items-center gap-[3px] font-['Roboto',sans-serif] text-[8px] leading-3 text-[#5f78ac]">
              <Icon name="community" big />
              <span className="whitespace-nowrap [writing-mode:vertical-rl]">Solid Edge Community</span>
            </button>
          </nav>
        </div>
        <StatusBar />
      </div>
    </div>
  );
}
